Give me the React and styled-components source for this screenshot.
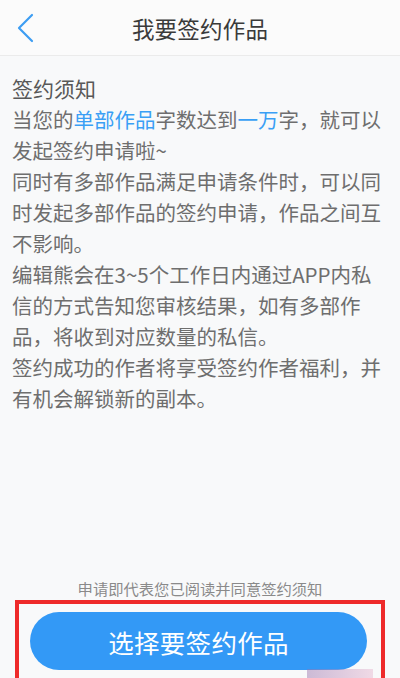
import styled, { createGlobalStyle } from 'styled-components'

const GlobalStyle = createGlobalStyle`
  html, body {
    margin: 0;
    padding: 0;
    background: #f8f9fa;
  }
  body {
    font-family: "Noto Sans CJK SC", "Noto Sans", sans-serif;
  }
  * {
    box-sizing: border-box;
  }
`

const Page = styled.div`
  height: 100vh;
  display: flex;
  flex-direction: column;
  overflow: hidden;
  position: relative;
  background: #f8f9fa;
`

const Header = styled.header`
  height: 56px;
  flex-shrink: 0;
  display: grid;
  grid-template-columns: 60px 1fr 60px;
  align-items: center;
  background: #fbfbfb;
  border-bottom: 1px solid #ebebeb;
`

const BackButton = styled.button`
  border: none;
  background: none;
  padding: 0 0 0 17px;
  display: flex;
  align-items: center;
  height: 100%;
  cursor: pointer;
`

const Title = styled.h1`
  margin: 0;
  text-align: center;
  font-size: 22.5px;
  font-weight: 400;
  color: #3a3a3a;
  letter-spacing: 0.2px;
`

const Content = styled.main`
  flex: 1;
  padding: 17px 18px 0 12px;
  color: #6e6e6e;
  font-size: 20.5px;
  line-height: 31px;
`

const NoticeTitle = styled.h2`
  margin: 0;
  font-size: 21px;
  font-weight: 400;
  color: #585858;
`

const Para = styled.p`
  margin: 0;
  width: 18em;
`

const Hl = styled.span`
  color: #3a9ff5;
`

const Footer = styled.footer`
  flex-shrink: 0;
  height: 100px;
  display: flex;
  flex-direction: column;
`

const Agree = styled.div`
  text-align: center;
  font-size: 15.3px;
  line-height: 20px;
  color: #8a8a8a;
  margin-bottom: 2px;
`

const Frame = styled.div`
  margin-left: 15px;
  width: 370px;
  flex-shrink: 0;
  border: 4px solid #ee2a2a;
  padding: 8px 14px 12px 11px;
`

const MainButton = styled.button`
  display: block;
  width: 100%;
  height: 58px;
  border: none;
  border-radius: 29px;
  background: #3399f6;
  color: #fff;
  font-family: inherit;
  font-size: 25.5px;
  letter-spacing: 0.3px;
  cursor: pointer;
`

const Watermark = styled.div`
  position: absolute;
  right: 27px;
  bottom: 0;
  width: 66px;
  height: 9px;
  background: linear-gradient(90deg, rgba(150, 110, 170, 0.45), rgba(230, 180, 205, 0.45));
`

export default function App() {
  return (
    <Page>
      <GlobalStyle />
      <Header>
        <BackButton aria-label="返回">
          <svg width="18" height="30" viewBox="0 0 18 30" fill="none">
            <path d="M15 2 L2 15 L15 28" stroke="#3d9df2" strokeWidth="2.2" strokeLinecap="round" strokeLinejoin="round" />
          </svg>
        </BackButton>
        <Title>我要签约作品</Title>
        <div />
      </Header>
      <Content>
        <NoticeTitle>签约须知</NoticeTitle>
        <Para>
          当您的<Hl>单部作品</Hl>字数达到<Hl>一万</Hl>字，就可以发起签约申请啦~
        </Para>
        <Para>同时有多部作品满足申请条件时，可以同时发起多部作品的签约申请，作品之间互不影响。</Para>
        <Para>编辑熊会在3~5个工作日内通过APP内私信的方式告知您审核结果，如有多部作品，将收到对应数量的私信。</Para>
        <Para>签约成功的作者将享受签约作者福利，并有机会解锁新的副本。</Para>
      </Content>
      <Footer>
        <Agree>申请即代表您已阅读并同意签约须知</Agree>
        <Frame>
          <MainButton>选择要签约作品</MainButton>
        </Frame>
      </Footer>
      <Watermark />
    </Page>
  )
}
